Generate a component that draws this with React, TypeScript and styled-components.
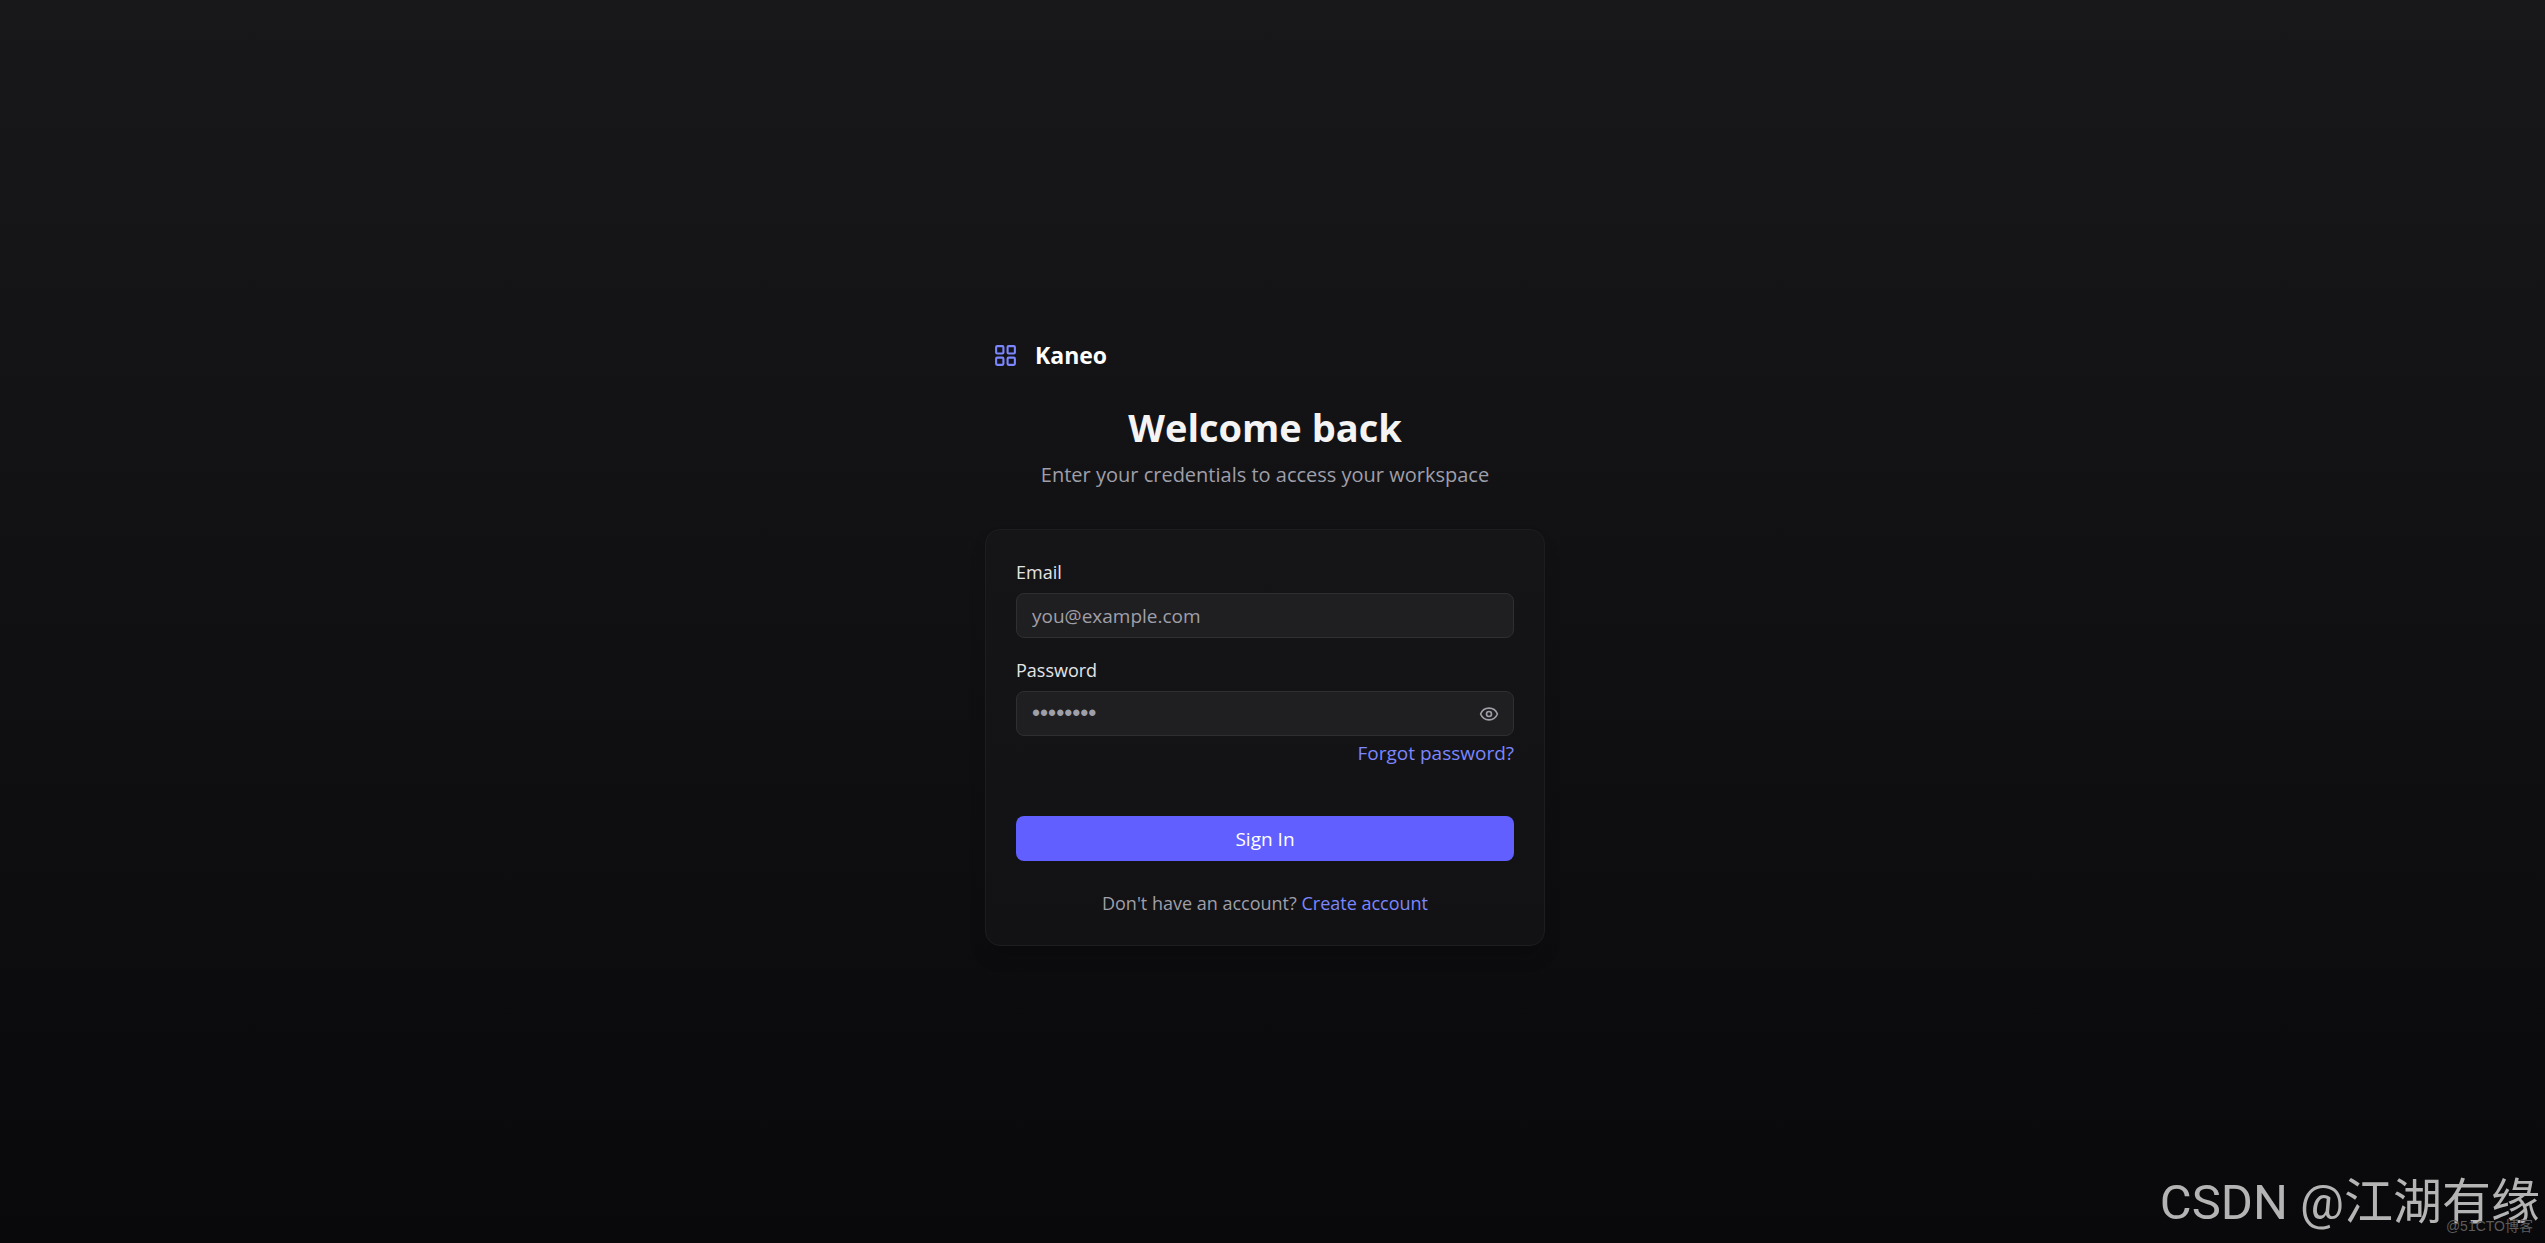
import React, { useState } from "react";
import styled, { createGlobalStyle } from "styled-components";
import { Eye, EyeOff, LayoutGrid } from "lucide-react";

const GlobalStyle = createGlobalStyle`
  *, *::before, *::after { box-sizing: border-box; }
  html { background: #09090b; }
  body {
    margin: 0;
    color: #f4f4f5;
    font-family: "Open Sans", "Noto Sans", "Noto Sans CJK SC", sans-serif;
    font-size: 18px;
    line-height: 24px;
  }
  button, input { font: inherit; }
`;

const Page = styled.div`
  position: relative;
  display: flex;
  align-items: center;
  justify-content: center;
  min-height: 100vh;
  padding: 20px 15px 20px 0;
  background: linear-gradient(to bottom, #18181b, #09090b);
`;

const Content = styled.main`
  display: flex;
  flex-direction: column;
  width: 100%;
  max-width: 560px;
`;

const Brand = styled.div`
  display: flex;
  align-items: center;
  gap: 17px;
  padding: 40px 8px 34px;
  color: #ffffff;
  font-size: 23px;
  font-weight: 700;
  line-height: 36px;

  svg { color: #7c86ff; }
`;

const Heading = styled.header`
  display: flex;
  flex-direction: column;
  gap: 12px;
  margin-bottom: 38px;
  text-align: center;
`;

const Title = styled.h1`
  margin: 0;
  font-size: 38px;
  font-weight: 700;
  line-height: 40px;
`;

const Subtitle = styled.p`
  margin: 0;
  color: #9f9fa9;
  font-size: 20px;
  line-height: 32px;
`;

const Card = styled.section`
  padding: 30px;
  border: 1px solid #1d1d20;
  border-radius: 15px;
  background: linear-gradient(to bottom, #151518, #121214);
  box-shadow: 0 12px 20px -4px rgba(0, 0, 0, 0.2);
`;

const Form = styled.form`
  display: flex;
  flex-direction: column;
`;

const Field = styled.div`
  display: flex;
  flex-direction: column;
  gap: 9px;
  margin-bottom: 20px;
`;

const Label = styled.label`
  color: #e4e4e7;
`;

const InputShell = styled.div`
  display: flex;
  align-items: center;
  height: 45px;
  border: 1px solid #2f2f32;
  border-radius: 8px;
  background: #1f1f21;
`;

const Input = styled.input<{ $dots?: boolean }>`
  flex: 1;
  min-width: 0;
  height: 100%;
  padding: 0 15px;
  border: 0;
  outline: 0;
  background: transparent;
  color: #f4f4f5;
  font-size: 19px;

  &::placeholder {
    color: #9f9fa9;
    opacity: 1;
    font-family: ${({ $dots }) => ($dots ? '"Liberation Sans", sans-serif' : "inherit")};
    font-size: ${({ $dots }) => ($dots ? "23px" : "inherit")};
  }
`;

const IconButton = styled.button`
  display: flex;
  padding: 0;
  margin-right: 14px;
  border: 0;
  background: transparent;
  color: #9f9fa9;
  cursor: pointer;
`;

const Link = styled.a`
  color: #7c86ff;
  text-decoration: none;
`;

const ForgotLink = styled(Link)`
  align-self: flex-end;
  margin-top: -4px;
  font-size: 19px;
`;

const Submit = styled.button`
  height: 45px;
  margin-top: 31px;
  border: 0;
  border-radius: 8px;
  background: #615fff;
  color: #ffffff;
  font-size: 19px;
  cursor: pointer;
`;

const SignUp = styled.p`
  margin: 30px 0 0;
  color: #9f9fa9;
  text-align: center;
`;

const Watermark = styled.div`
  position: absolute;
  right: 5px;
  bottom: 8px;
  color: #b4b4b4;
  font-family: Roboto, "Noto Sans CJK SC", sans-serif;
  font-size: 49px;
  line-height: 64px;
`;

const SmallMark = styled.div`
  position: absolute;
  right: 12px;
  bottom: 7px;
  color: #5c5c5c;
  font-family: "Liberation Sans", "Noto Sans CJK SC", sans-serif;
  font-size: 14px;
  line-height: 20px;
`;

export default function App() {
  const [visible, setVisible] = useState(false);

  return (
    <>
      <GlobalStyle />
      <Page>
        <Content>
          <Brand>
            <LayoutGrid size={25} strokeWidth={2} aria-hidden />
            <span>Kaneo</span>
          </Brand>
          <Heading>
            <Title>Welcome back</Title>
            <Subtitle>Enter your credentials to access your workspace</Subtitle>
          </Heading>
          <Card>
            <Form onSubmit={(event) => event.preventDefault()}>
              <Field>
                <Label htmlFor="email">Email</Label>
                <InputShell>
                  <Input id="email" type="email" placeholder="you@example.com" />
                </InputShell>
              </Field>
              <Field>
                <Label htmlFor="password">Password</Label>
                <InputShell>
                  <Input
                    id="password"
                    type={visible ? "text" : "password"}
                    placeholder="••••••••"
                    $dots
                  />
                  <IconButton
                    type="button"
                    aria-label={visible ? "Hide password" : "Show password"}
                    onClick={() => setVisible(!visible)}
                  >
                    {visible ? <EyeOff size={20} /> : <Eye size={20} />}
                  </IconButton>
                </InputShell>
                <ForgotLink href="#forgot">Forgot password?</ForgotLink>
              </Field>
              <Submit type="submit">Sign In</Submit>
            </Form>
            <SignUp>
              Don't have an account? <Link href="#signup">Create account</Link>
            </SignUp>
          </Card>
        </Content>
        <Watermark>CSDN @江湖有缘</Watermark>
        <SmallMark>@51CTO博客</SmallMark>
      </Page>
    </>
  );
}
